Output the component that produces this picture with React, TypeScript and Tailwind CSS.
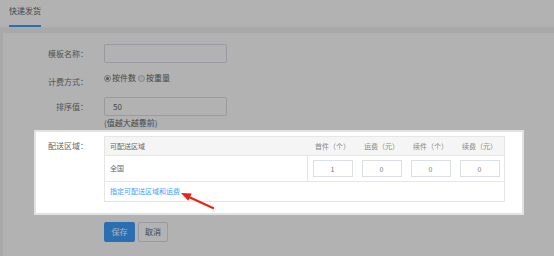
import { useState } from 'react';

const cols = ['首件（个）', '运费（元）', '续件（个）', '续费（元）'];

function Radio({ checked, label }: { checked: boolean; label: string }) {
  return (
    <span className="flex items-center gap-px">
      <span
        className={`flex h-[7px] w-[7px] items-center justify-center rounded-full border ${
          checked ? 'border-[#a0a0a0] bg-white' : 'border-[#c0c4cc] bg-[#f0f0f0]'
        }`}
      >
        {checked && <span className="h-[3px] w-[3px] rounded-full bg-[#777]" />}
      </span>
      <span>{label}</span>
    </span>
  );
}

export default function App() {
  const [values, setValues] = useState(['1', '0', '0', '0']);

  return (
    <div className="relative flex h-[256px] w-[554px] flex-col overflow-hidden bg-[#f3f3f3] font-['Noto_Sans_CJK_SC',sans-serif] text-[8px] leading-none text-[#777]">
      {/* tab header */}
      <div className="h-[27px] shrink-0 bg-white pl-[9px]">
        <div className="flex h-[27px] w-[32px] items-center justify-center border-b-2 border-[#409eff] pb-[3px] text-[#666]">
          快递发货
        </div>
      </div>

      <div className="ml-[3px] mt-[6px] flex-1 bg-white pt-[11px]">
        <div className="flex items-center">
          <div className="w-[85px] text-right">模板名称：</div>
          <div className="ml-[16px] h-[19px] w-[123px] rounded-[2px] border border-[#dcdfe6]" />
        </div>

        <div className="mt-[11px] flex h-[16px]">
          <div className="flex w-[85px] items-center justify-end">计费方式：</div>
          <div className="ml-[16px] flex items-start gap-[2px] text-[#666]">
            <Radio checked label="按件数" />
            <Radio checked={false} label="按重量" />
          </div>
        </div>

        <div className="mt-[7px] flex items-center">
          <div className="w-[85px] text-right">排序值：</div>
          <div className="ml-[16px] flex h-[19px] w-[123px] items-center rounded-[2px] border border-[#dcdfe6] pl-[8px] text-[#666]">
            50
          </div>
        </div>
        <div className="ml-[101px] mt-[3px] text-[#666]">(值越大越靠前)</div>

        {/* highlighted row */}
        <div className="relative z-20 ml-[31px] mt-[3px] flex w-[490px] border-2 border-[#e2e2e2] bg-white pb-[11px] pt-[4px]">
          <div className="flex h-[20px] w-[52px] items-center justify-end text-[#666]">配送区域：</div>
          <div className="ml-[16px] grid w-[401px] grid-cols-[203px_repeat(4,49px)] border border-[#e6e6e6] text-[7px] text-[#666]">
            <div className="flex h-[19px] items-center border-b border-[#e6e6e6] bg-[#f5f5f5] pl-[5px]">可配送区域</div>
            {cols.map((c) => (
              <div key={c} className="flex h-[19px] items-center justify-center border-b border-[#e6e6e6] bg-[#f5f5f5] text-[#888]">
                {c}
              </div>
            ))}
            <div className="flex h-[26px] items-center border-b border-r border-[#e6e6e6] pl-[5px]">全国</div>
            {values.map((v, i) => (
              <div key={i} className="flex h-[26px] items-center justify-center border-b border-[#e6e6e6]">
                <input
                  value={v}
                  onChange={(e) => setValues(values.map((x, j) => (j === i ? e.target.value : x)))}
                  className="h-[17px] w-[40px] border border-[#dcdfe6] text-center text-[7px] text-[#777] outline-none"
                />
              </div>
            ))}
            <div className="col-span-5 flex h-[19px] items-center pl-[5px] text-[#409eff]">指定可配送区域和运费</div>
          </div>
        </div>

        <div className="ml-[101px] mt-[7px] flex gap-[3px]">
          <button type="button" className="h-[20px] w-[31px] rounded-[2px] bg-[#409eff] text-white">
            保存
          </button>
          <button type="button" className="h-[20px] w-[30px] rounded-[2px] border border-[#dcdfe6] bg-white text-[#666]">
            取消
          </button>
        </div>
      </div>

      {/* guide overlay */}
      <div className="absolute inset-0 z-10 bg-black/30" />
      <svg className="absolute left-[175px] top-[185px] z-30" width="45" height="28" viewBox="0 0 45 28">
        <line x1="38" y1="23" x2="14" y2="12" stroke="#e8231a" strokeWidth="2.2" strokeLinecap="round" />
        <polygon points="6,8 16.7,8.6 13.3,15.8" fill="#e8231a" />
      </svg>
    </div>
  );
}
